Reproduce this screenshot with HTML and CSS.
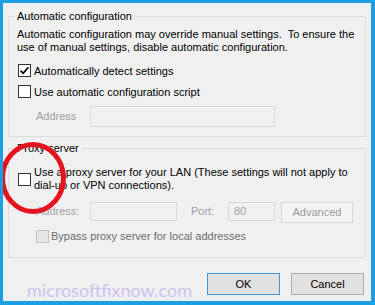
FILE: index.html
```html
<!DOCTYPE html>
<html lang="en">
<head>
    <meta charset="UTF-8">
    <meta name="viewport" content="width=device-width, initial-scale=1.0">
    <title>Local Area Network (LAN) Settings</title>
    <link rel="stylesheet" href="styles.css">
</head>
<body>
    <div class="window">
        <fieldset class="group group-auto">
            <legend>Automatic configuration</legend>
            <p class="desc">Automatic configuration may override manual settings.&nbsp; To ensure the<br>use of manual settings, disable automatic configuration.</p>
            <label class="check-row">
                <span class="box">
                    <svg width="11" height="11" viewBox="0 0 11 11"><path d="M1.6 5.6 L4.2 8.3 L9.4 2.2" fill="none" stroke="#000" stroke-width="1.7"/></svg>
                </span>
                Automatically detect settings
            </label>
            <label class="check-row">
                <span class="box"></span>
                Use automatic configuration script
            </label>
            <div class="field-row field-row-script">
                <span class="field-label">Address</span>
                <span class="input input-script"></span>
            </div>
        </fieldset>

        <fieldset class="group group-proxy">
            <legend>Proxy server</legend>
            <label class="check-row check-wrap">
                <span class="box"></span>
                <span>Use a proxy server for your LAN (These settings will not apply to<br>dial-up or VPN connections).</span>
            </label>
            <div class="field-row field-row-proxy">
                <span class="field-label">Address:</span>
                <span class="input input-address"></span>
                <span class="field-label port-label">Port:</span>
                <span class="input input-port">80</span>
                <button class="btn btn-disabled">Advanced</button>
            </div>
            <label class="check-row bypass">
                <span class="box box-disabled"></span>
                Bypass proxy server for local addresses
            </label>
        </fieldset>

        <div class="footer">
            <span class="watermark">microsoftfixnow.com</span>
            <button class="btn btn-default">OK</button>
            <button class="btn">Cancel</button>
        </div>

        <!-- red marker drawn over the proxy checkbox -->
        <svg class="annotation" width="368" height="298" viewBox="0 0 368 298">
            <ellipse cx="30" cy="175" rx="30.5" ry="33.5" fill="none" stroke="#e3141f" stroke-width="5"/>
        </svg>
    </div>
</body>
</html>
```
FILE: styles.css
```css
body {
    margin: 0;
}

.window {
    position: relative;
    overflow: hidden;
    width: 375px;
    height: 305px;
    box-sizing: border-box;
    border: 3px solid #1ba1e2;
    border-right-width: 4px;
    border-bottom-width: 4px;
    background: #f0f0f0;
    padding: 6px 5px 0;
    font: 11px 'Liberation Sans', Arial, sans-serif;
    color: #000;
}

.group {
    margin: 0;
    border: 1px solid #dcdcdc;
    padding: 4px 8px 9px;
    min-inline-size: auto;
}

.group legend {
    padding: 0 2px;
    margin-left: -2px;
    line-height: 15px;
}

.group-proxy {
    margin-top: 4px;
    padding: 10px 8px 11px;
}

.desc {
    margin: 0 0 6px;
    line-height: 13px;
}

.check-row {
    display: flex;
    align-items: center;
    height: 21px;
}

.check-wrap {
    height: auto;
    line-height: 13px;
}

.box {
    display: flex;
    align-items: center;
    justify-content: center;
    flex: none;
    width: 13px;
    height: 13px;
    box-sizing: border-box;
    border: 1px solid #333;
    background: #fff;
    margin: 0 3px 0 1px;
}

.box-disabled {
    border-color: #c2c2c2;
    background: #e6e6e6;
}

.bypass {
    height: 20px;
    margin-top: 3px;
    margin-left: 18px;
    color: #6d6d6d;
}

.bypass .box {
    margin-right: 2px;
}

.field-row {
    display: flex;
    align-items: flex-start;
    margin-left: 19px;
    color: #a0a0a0;
}

.field-row-script {
    margin-top: 4px;
    line-height: 21px;
}

.field-row-proxy {
    margin-top: 10px;
    line-height: 19px;
}

.field-label {
    width: 54px;
}

.port-label {
    width: 37px;
    margin-left: 14px;
}

.input {
    box-sizing: border-box;
    border: 1px solid #dadada;
    background: #f0f0f0;
    line-height: 17px;
}

.input-script {
    width: 185px;
    height: 21px;
}

.input-address {
    width: 87px;
    height: 19px;
}

.input-port {
    width: 47px;
    height: 19px;
    padding-left: 5px;
}

.btn {
    width: 73px;
    height: 22px;
    box-sizing: border-box;
    padding: 0;
    border: 1px solid #adadad;
    background: #e1e1e1;
    font: inherit;
    color: #000;
}

.btn-default {
    border-color: #3e95e0;
}

.btn-disabled {
    width: 72px;
    height: 21px;
    margin-left: 6px;
    border-color: #d6d6d6;
    background: #f4f4f4;
    color: #9a9a9a;
}

.footer {
    display: flex;
    align-items: flex-start;
    justify-content: flex-end;
    gap: 11px;
    margin-top: 15px;
    padding-right: 2px;
}

.watermark {
    margin: 7px auto 0 19px;
    font: 18px Lato, sans-serif;
    line-height: 20px;
    color: #cdc3ee;
}

.annotation {
    position: absolute;
    left: 0;
    top: 0;
    pointer-events: none;
}
```
